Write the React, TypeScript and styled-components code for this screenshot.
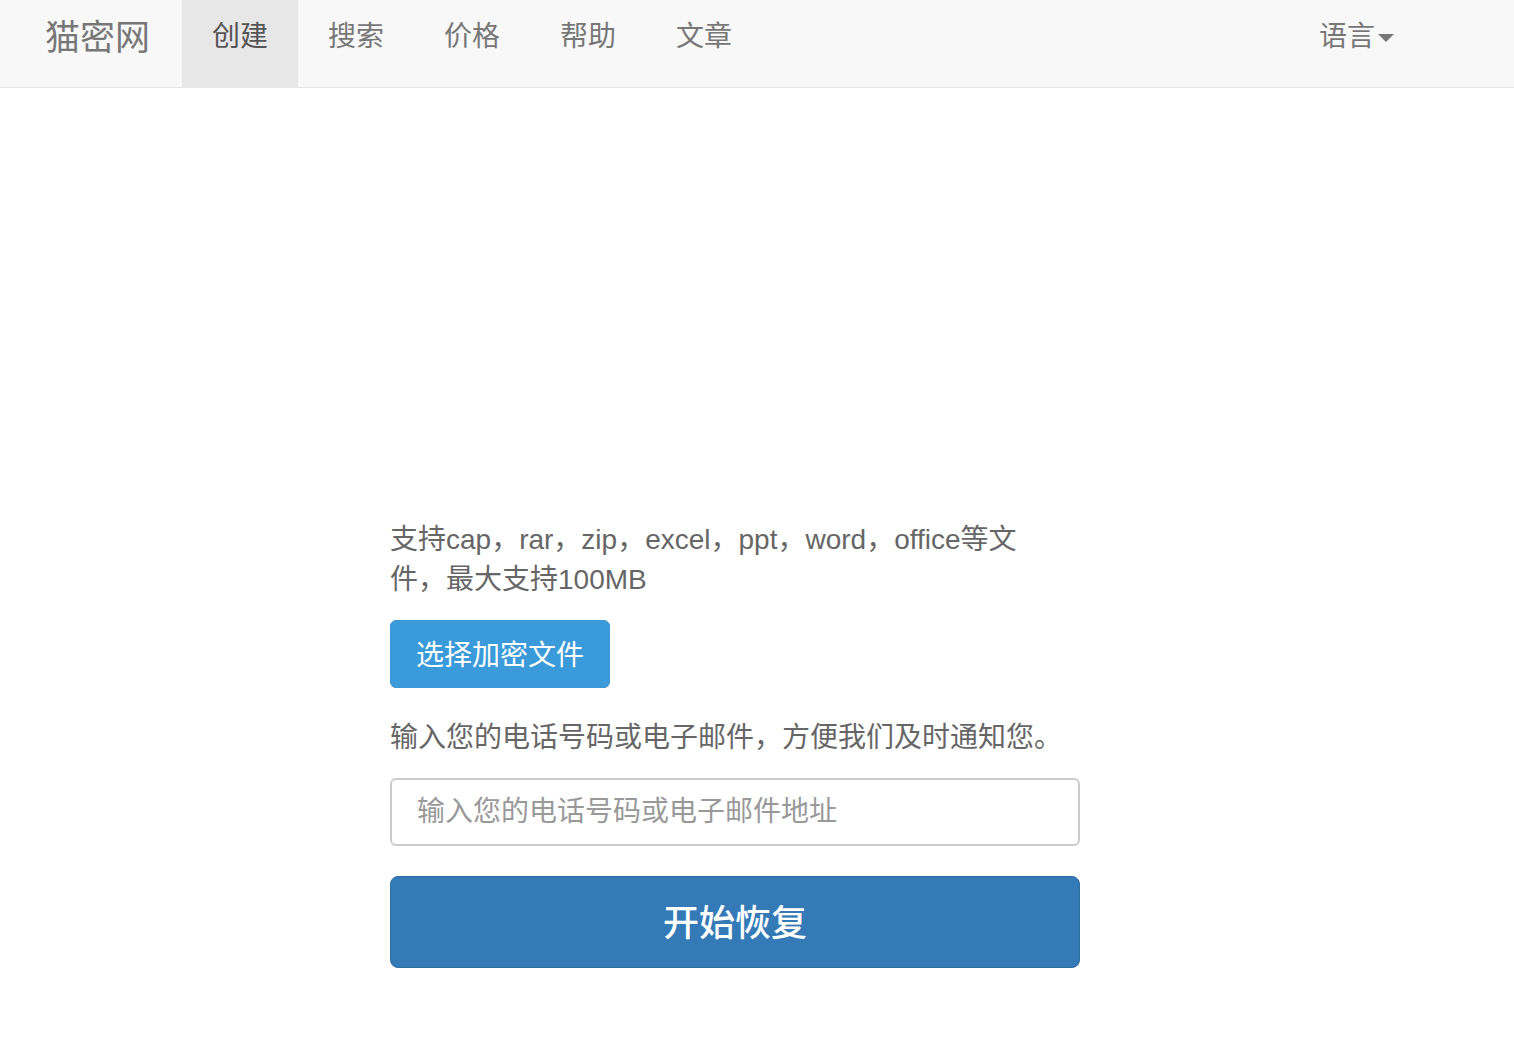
import React from 'react'
import styled, { createGlobalStyle } from 'styled-components'

const navItems = ['创建', '搜索', '价格', '帮助', '文章']

export default function App() {
  return (
    <>
      <GlobalStyle />
      <Navbar>
        <Brand>猫密网</Brand>
        <NavList>
          {navItems.map((item, i) => (
            <NavLink key={item} $active={i === 0}>{item}</NavLink>
          ))}
        </NavList>
        <LangMenu>
          语言<Caret />
        </LangMenu>
      </Navbar>
      <Main>
        <Form>
          <Hint>支持cap，rar，zip，excel，ppt，word，office等文件，最大支持100MB</Hint>
          <FileButton>选择加密文件</FileButton>
          <Label>输入您的电话号码或电子邮件，方便我们及时通知您。</Label>
          <ContactInput placeholder="输入您的电话号码或电子邮件地址" />
          <SubmitButton>开始恢复</SubmitButton>
        </Form>
      </Main>
    </>
  )
}

const GlobalStyle = createGlobalStyle`
  body {
    margin: 0;
    background: #fff;
    font-family: "Liberation Sans", "Noto Sans CJK SC", sans-serif;
    color: #666;
  }
`

const Navbar = styled.nav`
  display: flex;
  align-items: stretch;
  height: 87px;
  background: #f8f8f8;
  border-bottom: 1px solid #e7e7e7;
`

const Brand = styled.a`
  padding: 16px 32px 0 45px;
  font-size: 35px;
  line-height: 44px;
  color: #777;
`

const NavList = styled.div`
  display: flex;
`

const NavLink = styled.a<{ $active?: boolean }>`
  padding: 17px 30px 0;
  font-size: 28px;
  line-height: 40px;
  color: ${p => (p.$active ? '#555' : '#777')};
  background: ${p => (p.$active ? '#e7e7e7' : 'transparent')};
`

const LangMenu = styled.a`
  display: flex;
  align-items: flex-start;
  margin-left: auto;
  margin-right: 120px;
  padding-top: 17px;
  font-size: 28px;
  line-height: 40px;
  color: #777;
`

const Caret = styled.span`
  margin: 17px 0 0 3px;
  width: 0;
  height: 0;
  border-top: 8px solid #777;
  border-left: 8px solid transparent;
  border-right: 8px solid transparent;
`

const Main = styled.main`
  padding: 432px 0 60px 390px;
`

const Form = styled.div`
  display: flex;
  flex-direction: column;
  align-items: flex-start;
  width: 690px;
`

const Hint = styled.p`
  margin: 0;
  max-width: 660px;
  font-size: 28px;
  line-height: 40px;
`

const FileButton = styled.button`
  margin-top: 20px;
  height: 68px;
  padding: 0 25px 2px;
  border: 1px solid #3a97d6;
  border-radius: 6px;
  background: #3b9ad9;
  color: #fff;
  font-family: inherit;
  font-size: 28px;
`

const Label = styled.p`
  margin: 30px 0 0;
  font-size: 28px;
  line-height: 40px;
`

const ContactInput = styled.input`
  box-sizing: border-box;
  margin-top: 20px;
  width: 100%;
  height: 68px;
  padding: 0 25px;
  border: 2px solid #ccc;
  border-radius: 6px;
  font-family: inherit;
  font-size: 28px;
  color: #555;
  &::placeholder {
    color: #999;
  }
`

const SubmitButton = styled.button`
  margin-top: 30px;
  width: 100%;
  height: 92px;
  padding-bottom: 5px;
  border: 1px solid #2e6da4;
  border-radius: 8px;
  background: #337ab7;
  color: #fff;
  font-family: inherit;
  font-size: 36px;
  font-weight: 500;
`
